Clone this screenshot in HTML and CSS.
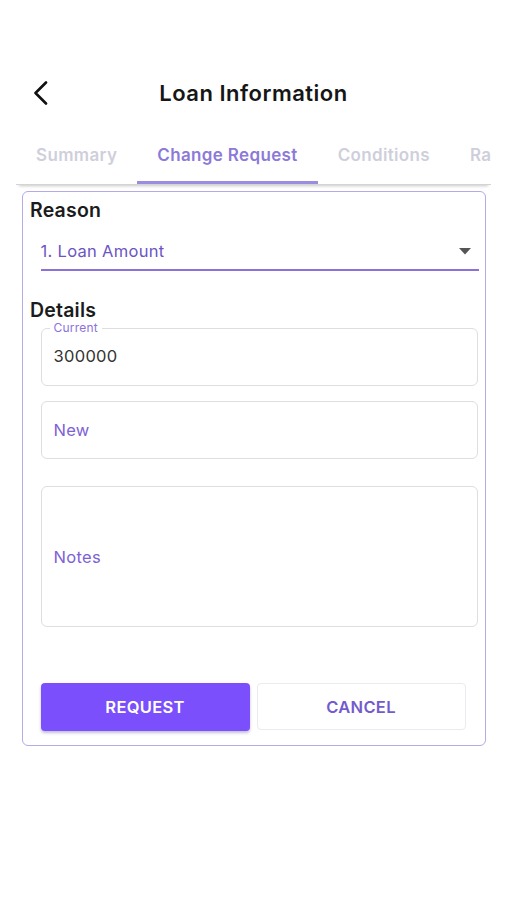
FILE: index.html
```html
<!DOCTYPE html>
<html lang="en">
<head>
<meta charset="utf-8">
<title>Loan Information</title>
<link rel="stylesheet" href="styles.css">
</head>
<body>
<div class="screen">
  <header class="topbar">
    <button class="back" aria-label="Back">
      <svg width="16" height="24" viewBox="0 0 16 24"><path d="M13 1.5 L2.5 12 L13 22.5" fill="none" stroke="#111" stroke-width="2.6" stroke-linecap="round" stroke-linejoin="round"/></svg>
    </button>
    <h1 class="title">Loan Information</h1>
  </header>

  <nav class="tabs">
    <div class="tab">Summary</div>
    <div class="tab active">Change Request</div>
    <div class="tab">Conditions</div>
    <div class="tab">Rates</div>
  </nav>

  <section class="card">
    <h2 class="heading">Reason</h2>
    <div class="select">
      <span>1. Loan Amount</span>
      <svg class="caret" width="12" height="7" viewBox="0 0 12 7"><path d="M0 0 H12 L6 6.5 Z" fill="#555"/></svg>
    </div>

    <h2 class="heading details">Details</h2>
    <div class="field current">
      <span class="float-label">Current</span>
      <span class="value">300000</span>
    </div>
    <div class="field new">
      <span class="placeholder">New</span>
    </div>
    <div class="field notes">
      <span class="placeholder">Notes</span>
    </div>

    <div class="actions">
      <button class="btn primary">REQUEST</button>
      <button class="btn secondary">CANCEL</button>
    </div>
  </section>
</div>
</body>
</html>
```

FILE: styles.css
```css
* { box-sizing: border-box; }
html, body { margin: 0; padding: 0; background: #fff; }
body {
  font-family: "Inter", "Noto Sans", sans-serif;
  color: #1a1a1a;
  width: 507px;
  height: 900px;
  overflow: hidden;
}
.screen { display: flex; flex-direction: column; }

.topbar {
  margin-top: 70px;
  height: 46px;
  display: flex;
  align-items: center;
  justify-content: center;
  position: relative;
}
.back {
  position: absolute;
  left: 33px;
  top: 11px;
  border: 0;
  background: none;
  padding: 0;
  width: 18px;
  height: 24px;
  display: flex;
}
.title {
  margin: 0;
  font-size: 22px;
  font-weight: 600;
  letter-spacing: 0.5px;
  color: #161616;
}

.tabs {
  margin: 0 16px;
  height: 69px;
  display: flex;
  overflow: hidden;
  white-space: nowrap;
  box-shadow: 0 4px 3px -3px rgba(0,0,0,0.22);
  border-bottom: 1px solid #d4d4d4;
}
.tab {
  padding: 27px 20px 0;
  line-height: 24px;
  font-size: 17px;
  font-weight: 600;
  letter-spacing: 0.35px;
  color: #cfcfdb;
  flex: 0 0 auto;
}
.tab.active {
  color: #8c79d9;
  border-bottom: 3px solid #9a8ce0;
}

.card {
  margin: 6px 21px 0 22px;
  border: 1.5px solid #b3aae7;
  border-radius: 6px;
  padding: 7px 7px 14px 7px;
  display: flex;
  flex-direction: column;
}
.heading {
  margin: 0;
  font-size: 19.5px;
  line-height: 22px;
  font-weight: 600;
  letter-spacing: 0.2px;
  color: #1b1b1b;
}
.select {
  margin: 19px -1px 0 10.5px;
  display: flex;
  align-items: center;
  justify-content: space-between;
  font-size: 16.5px;
  letter-spacing: 0.3px;
  line-height: 22px;
  color: #6b55c4;
  padding: 0 8px 7px 0;
  border-bottom: 2px solid #8a72d8;
}
.caret { margin-top: 1px; }
.details { margin-top: 28px; }

.field {
  margin-left: 10.5px;
  border: 1px solid #dedde2;
  border-radius: 6px;
  display: flex;
  align-items: center;
  padding: 0 12px;
  position: relative;
  font-size: 16.5px;
  letter-spacing: 0.3px;
}
.current { margin-top: 7px; height: 58px; padding-bottom: 2px; }
.new { margin-top: 15px; height: 58px; }
.notes { margin-top: 27px; height: 141px; }
.float-label {
  position: absolute;
  left: 8px;
  top: -8px;
  padding: 0 4px;
  background: #fff;
  font-size: 12px;
  line-height: 14px;
  letter-spacing: 0.2px;
  color: #8b73dc;
}
.value { color: #333; }
.placeholder { color: #7d62d6; }

.actions {
  margin: 56px 0 0 10.5px;
  display: flex;
  gap: 7px;
}
.btn {
  width: 209px;
  height: 48px;
  border-radius: 4px;
  font-family: inherit;
  font-size: 16.5px;
  font-weight: 600;
  letter-spacing: 0.3px;
}
.primary {
  background: #7b4ffb;
  color: #fff;
  border: 0;
  box-shadow: 0 2px 3px rgba(60, 40, 140, 0.3);
}
.secondary {
  background: #fff;
  color: #735bcd;
  border: 1px solid #ebeaf0;
  height: 47px;
}
```
